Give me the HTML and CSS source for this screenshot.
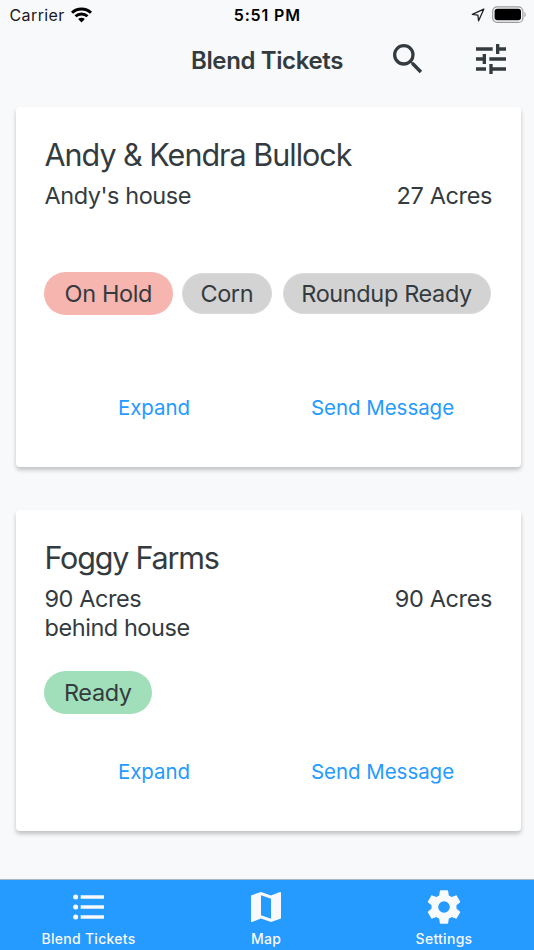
FILE: index.html
```html
<!DOCTYPE html>
<html lang="en">
<head>
<meta charset="utf-8">
<title>Blend Tickets</title>
<link rel="stylesheet" href="styles.css">
</head>
<body>
<div class="app">
  <div class="status">
    <div class="status-left">
      <span class="carrier">Carrier</span>
      <svg class="wifi" viewBox="0 0 21 16" width="21" height="16"><g fill="none" stroke="#000" stroke-width="2.9"><path d="M1 5.7C6.3.7 14.7.7 20 5.7"/><path d="M4.5 9.3c3.4-3.1 8.6-3.1 12 0"/></g><path d="M7.1 12c2-1.7 4.8-1.7 6.8 0l-3.4 3.5z"/></svg>
    </div>
    <span class="time">5:51 PM</span>
    <div class="status-right">
      <svg class="location" viewBox="0 0 14 14" width="14" height="14"><path d="M12.8 1.2 1.3 6.3 6.9 7.2 7.6 12.8z" fill="none" stroke="#222" stroke-width="1.3" stroke-linejoin="round"/></svg>
      <svg class="battery" viewBox="0 0 35 18" width="35" height="18"><rect x=".7" y=".8" width="30.2" height="15.6" rx="4.5" fill="none" stroke="#999a9c" stroke-width="1.2"/><rect x="2.6" y="2.8" width="26.4" height="11.4" rx="2.7"/><path d="M32.4 6v5.2c1.8-.7 1.8-4.5 0-5.2" fill="#a5a6a8"/></svg>
    </div>
  </div>
  <header class="header">
    <h1>Blend Tickets</h1>
    <svg class="icon search" viewBox="0 0 24 24"><path d="M15.5 14h-.79l-.28-.27A6.47 6.47 0 0 0 16 9.5 6.5 6.5 0 1 0 9.5 16c1.61 0 3.09-.59 4.23-1.57l.27.28v.79l5 4.99L20.49 19l-4.99-5zm-6 0C7.01 14 5 11.99 5 9.5S7.01 5 9.5 5 14 7.01 14 9.5 11.99 14 9.5 14z"/></svg>
    <svg class="icon tune" viewBox="0 0 24 24"><path d="M3 17v2h6v-2H3zM3 5v2h10V5H3zm10 16v-2h8v-2h-8v-2h-2v6h2zM7 9v2H3v2h4v2h2V9H7zm14 4v-2H11v2h10zm-6-4h2V7h4V5h-4V3h-2v6z"/></svg>
  </header>
  <main class="list">
    <article class="card">
      <h2 class="name-andy">Andy &amp; Kendra Bullock</h2>
      <div class="details"><span class="place">Andy's house</span><span class="acres">27 Acres</span></div>
      <div class="chips">
        <span class="chip hold">On Hold</span>
        <span class="chip tag corn">Corn</span>
        <span class="chip tag roundup">Roundup Ready</span>
      </div>
      <div class="actions"><a>Expand</a><a>Send Message</a></div>
    </article>
    <article class="card compact">
      <h2 class="name-foggy">Foggy Farms</h2>
      <div class="details"><span class="place">90 Acres<br>behind house</span><span class="acres">90 Acres</span></div>
      <div class="chips"><span class="chip ready">Ready</span></div>
      <div class="actions"><a>Expand</a><a>Send Message</a></div>
    </article>
  </main>
  <nav class="tabs">
    <div class="tab">
      <svg class="icon" viewBox="0 0 24 24"><path d="M7 5h14v2H7V5m0 8v-2h14v2H7M4 4.5A1.5 1.5 0 1 1 4 7.5 1.5 1.5 0 0 1 4 4.5m0 6a1.5 1.5 0 1 1 0 3 1.5 1.5 0 0 1 0-3M7 19v-2h14v2H7m-3-2.5a1.5 1.5 0 1 1 0 3 1.5 1.5 0 0 1 0-3z"/></svg>
      <span>Blend Tickets</span>
    </div>
    <div class="tab">
      <svg class="icon" viewBox="0 0 24 24"><path d="M20.5 3l-.16.03L15 5.1 9 3 3.36 4.9c-.21.07-.36.25-.36.48V20.5c0 .28.22.5.5.5l.16-.03L9 18.9l6 2.1 5.64-1.9c.21-.07.36-.25.36-.48V3.5c0-.28-.22-.5-.5-.5zM15 19l-6-2.11V5l6 2.11V19z"/></svg>
      <span>Map</span>
    </div>
    <div class="tab">
      <svg class="icon" viewBox="0 0 24 24"><path d="M12 15.5A3.5 3.5 0 0 1 8.5 12 3.5 3.5 0 0 1 12 8.5a3.5 3.5 0 0 1 3.5 3.5 3.5 3.5 0 0 1-3.5 3.5m7.43-2.53c.04-.32.07-.64.07-.97s-.03-.66-.07-1l2.11-1.63c.19-.15.24-.42.12-.64l-2-3.46c-.12-.22-.39-.31-.61-.22l-2.49 1c-.52-.39-1.06-.73-1.69-.98l-.37-2.65A.506.506 0 0 0 14 2h-4c-.25 0-.46.18-.5.42l-.37 2.65c-.63.25-1.17.59-1.69.98l-2.49-1c-.22-.09-.49 0-.61.22l-2 3.46c-.13.22-.07.49.12.64L4.57 11c-.04.34-.07.67-.07 1s.03.65.07.97l-2.11 1.66c-.19.15-.25.42-.12.64l2 3.46c.12.22.39.3.61.22l2.49-1.01c.52.4 1.06.74 1.69.99l.37 2.65c.04.24.25.42.5.42h4c.25 0 .46-.18.5-.42l.37-2.65c.63-.26 1.17-.59 1.69-.99l2.49 1.01c.22.08.49 0 .61-.22l2-3.46c.12-.22.07-.49-.12-.64l-2.11-1.66z"/></svg>
      <span>Settings</span>
    </div>
  </nav>
</div>
</body>
</html>
```

FILE: styles.css
```css
* { box-sizing: border-box; margin: 0; }
body { background: #f8f9fb; color: #343b3f; font-family: Inter, "Liberation Sans", sans-serif; }
.app { height: 950px; display: flex; flex-direction: column; overflow: hidden; }
svg { display: block; flex: none; }
.icon { width: 40px; height: 40px; fill: currentColor; }

.status { height: 30px; display: grid; grid-template-columns: 1fr auto 1fr; align-items: center; padding: 0 7px 0 9.5px; color: #000; font-size: 16px; }
.status-left, .status-right { display: flex; align-items: center; }
.status-left { gap: 6px; }
.status-right { justify-content: flex-end; gap: 7px; }
.carrier { letter-spacing: 0.4px; color: #1a1a1b; }
.time { font-weight: 600; font-size: 16px; letter-spacing: .85px; margin-left: -2px; }

.header { height: 60px; display: flex; align-items: center; padding: 0 23px 2px 191px; }
.header h1 { width: 197px; padding-top: 2px; font-size: 24px; font-weight: 600; letter-spacing: -.38px; white-space: nowrap; }
.tune { margin-left: auto; }

.list { flex: 1; display: flex; flex-direction: column; gap: 43px; padding: 17px 13px 0 16px; }
.card { height: 360px; padding: 29px 29px 0 28px; background: #fff; border-radius: 4px; box-shadow: 0 3px 4px rgba(0, 0, 0, .22); display: flex; flex-direction: column; }
.card.compact { height: 321px; }
.card h2 { padding-left: .5px; font-size: 30.5px; line-height: 38px; font-weight: 400; letter-spacing: -1px; white-space: nowrap; }
.card .name-foggy { letter-spacing: -1.2px; }
.details { display: flex; justify-content: space-between; padding: 8px 0 0 .5px; font-size: 23.5px; line-height: 28.5px; letter-spacing: -.45px; }
.acres { letter-spacing: -.38px; }
.chips { display: flex; align-items: center; height: 43px; margin-top: 61px; padding-left: .3px; }
.compact .chips { margin-top: 29px; }
.chip { height: 43px; display: flex; align-items: center; justify-content: center; padding-right: 1px; border-radius: 22px; font-size: 23.5px; letter-spacing: -.38px; white-space: nowrap; flex: none; }
.hold { width: 129px; background: #f7b5af; margin-right: 9px; }
.ready { width: 108px; background: #a0dfb9; }
.tag { height: 41px; background: #d3d3d3; border: 1px solid #dadada; }
.corn { width: 90px; margin-right: 10.5px; }
.roundup { width: 208.5px; }
.actions { display: grid; grid-template-columns: 220px 237px; margin-top: 79px; color: #259aff; font-size: 20.5px; line-height: 28px; letter-spacing: -.05px; text-align: center; }
.compact .actions { margin-top: 44px; }

.tabs { height: 71px; display: grid; grid-template-columns: repeat(3, 1fr); border-top: 1px solid #a9b7c3; background: #259aff; color: #f8f9fb; }
.tab { display: flex; flex-direction: column; align-items: center; padding: 7px 1px 0 0; font-size: 14px; line-height: 18px; font-weight: 500; }
.tab + .tab { padding-right: 2px; }
.tab span { margin-top: 3px; letter-spacing: .28px; }
```
